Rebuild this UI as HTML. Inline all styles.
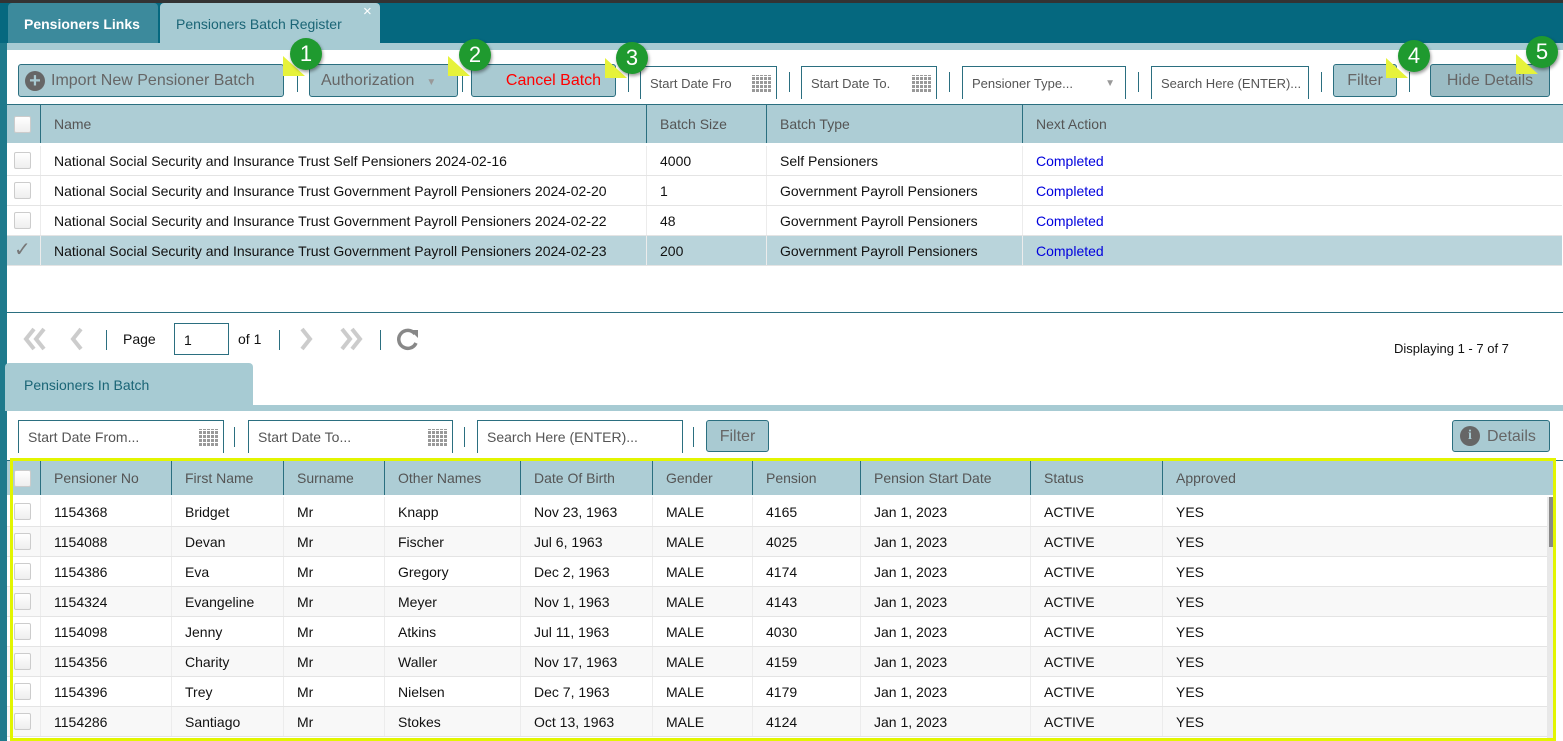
<!DOCTYPE html>
<html><head><meta charset="utf-8"><style>
*{box-sizing:border-box;margin:0;padding:0}
body{width:1563px;height:741px;overflow:hidden;background:#fff;font-family:"Liberation Sans",sans-serif;font-size:14px;color:#111;position:relative}
.a{position:absolute}
.btn{position:absolute;top:64px;height:33px;background:#a9cad2;border:1px solid #2b6f80;border-radius:3px;color:#666;font-size:16px;line-height:31px;text-align:center}
.inp{position:absolute;height:33px;background:#fff;border:1px solid #2b6f80;border-bottom:none;color:#555;font-size:13px;line-height:33px;padding-left:9px}
.sep{position:absolute;width:1px;height:20px;background:#2b6f80}
.cal{position:absolute;right:4px;top:8px;width:20px;height:17px;background:repeating-linear-gradient(90deg,#999 0 3px,transparent 3px 4px),#fff;-webkit-mask:repeating-linear-gradient(0deg,#000 0 3px,transparent 3px 4px);mask:repeating-linear-gradient(0deg,#000 0 3px,transparent 3px 4px)}
.hdr{position:absolute;background:#adcdd5;color:#555;font-size:14px}
.hdr div,.row div{position:absolute;top:0;height:100%;padding-left:13px}
.hdr div{border-left:1px solid #2b6f80}
.row{position:absolute;left:7px;height:30px;line-height:30px;border-bottom:1px solid #e4e4e4}
.row div{border-left:1px solid #ececec}
.cb{position:absolute;left:7px;width:17px;height:17px;border:1px solid #ccc;border-radius:2px;background:linear-gradient(#fff,#eee)}
.badge{position:absolute;width:32px;height:32px;border-radius:50%;background:#1f9a2f;color:#fff;font-size:22px;line-height:32px;text-align:center;box-shadow:1px 2px 3px rgba(0,0,0,.4);z-index:3}
.call{position:absolute;width:22px;height:20px;background:#e6f23a;clip-path:polygon(0 0,100% 100%,0 100%);z-index:2}
svg.pg{position:absolute;top:327px}
</style></head><body>
<div class="a" style="left:0;top:0;width:1563px;height:43px;background:#05687f"></div>
<div class="a" style="left:0;top:0;width:1563px;height:3px;background:#333"></div>
<div class="a" style="left:8px;top:3px;width:150px;height:40px;background:#3c8a9c;color:#fff;font-weight:bold;font-size:14px;line-height:42px;padding-left:16px;border-radius:4px 4px 0 0">Pensioners Links</div>
<div class="a" style="left:160px;top:3px;width:220px;height:40px;background:#a7cbd3;color:#1a6576;font-size:14px;line-height:42px;padding-left:16px;border-radius:4px 4px 0 0">Pensioners Batch Register<span class="a" style="left:203px;top:-12px;color:#fff;font-size:15px">×</span></div>
<div class="a" style="left:0;top:43px;width:1563px;height:7px;background:#a7cbd3"></div>
<div class="a" style="left:0;top:43px;width:7px;height:698px;background:#1f7a8c"></div>

<div class="btn" style="left:18px;width:266px;text-align:left;padding-left:32px">Import New Pensioner Batch<span class="a" style="left:6px;top:6px;width:20px;height:20px;border-radius:50%;background:#666;color:#a9cad2;font-weight:bold;font-size:20px;line-height:20px;text-align:center">+</span></div>
<div class="sep" style="left:297px;top:72px"></div>
<div class="btn" style="left:309px;width:149px;text-align:left;padding-left:11px">Authorization<span style="color:#999;font-size:10px;margin-left:12px">▼</span></div>
<div class="sep" style="left:462px;top:72px"></div>
<div class="btn" style="left:471px;width:145px;color:#f00;padding-left:20px">Cancel Batch</div>
<div class="sep" style="left:628px;top:72px"></div>
<div class="inp" style="left:640px;top:66px;width:137px">Start Date Fro<div class="cal"></div></div>
<div class="sep" style="left:789px;top:72px"></div>
<div class="inp" style="left:801px;top:66px;width:136px">Start Date To.<div class="cal"></div></div>
<div class="sep" style="left:949px;top:72px"></div>
<div class="inp" style="left:962px;top:66px;width:164px">Pensioner Type...<span class="a" style="right:10px;top:0;color:#999;font-size:10px">▼</span></div>
<div class="sep" style="left:1138px;top:72px"></div>
<div class="inp" style="left:1151px;top:66px;width:158px">Search Here (ENTER)...</div>
<div class="sep" style="left:1321px;top:72px"></div>
<div class="btn" style="left:1333px;width:64px">Filter</div>
<div class="sep" style="left:1409px;top:72px"></div>
<div class="btn" style="left:1430px;width:120px;background:#9bbcc4">Hide Details</div>

<div class="call" style="left:283px;top:56px"></div><div class="badge" style="left:290px;top:38px">1</div>
<div class="call" style="left:448px;top:56px"></div><div class="badge" style="left:459px;top:39px">2</div>
<div class="call" style="left:605px;top:58px"></div><div class="badge" style="left:616px;top:42px">3</div>
<div class="call" style="left:1386px;top:58px"></div><div class="badge" style="left:1398px;top:40px">4</div>
<div class="call" style="left:1516px;top:54px"></div><div class="badge" style="left:1526px;top:36px">5</div>

<div class="a" style="left:7px;top:104px;width:1556px;height:1px;background:#2b6f80"></div>
<div class="hdr" style="left:7px;top:105px;width:1556px;height:38px;line-height:38px">
<span class="cb" style="left:7px;top:11px"></span>
<div style="left:33px">Name</div><div style="left:639px">Batch Size</div><div style="left:759px">Batch Type</div><div style="left:1015px">Next Action</div></div>

<div class="row" style="top:146px;width:1555px"><span class="cb" style="top:6px"></span><div style="left:33px">National Social Security and Insurance Trust Self Pensioners 2024-02-16</div><div style="left:639px">4000</div><div style="left:759px">Self Pensioners</div><div style="left:1015px;color:#00d">Completed</div></div>
<div class="row" style="top:176px;width:1555px"><span class="cb" style="top:6px"></span><div style="left:33px">National Social Security and Insurance Trust Government Payroll Pensioners 2024-02-20</div><div style="left:639px">1</div><div style="left:759px">Government Payroll Pensioners</div><div style="left:1015px;color:#00d">Completed</div></div>
<div class="row" style="top:206px;width:1555px"><span class="cb" style="top:6px"></span><div style="left:33px">National Social Security and Insurance Trust Government Payroll Pensioners 2024-02-22</div><div style="left:639px">48</div><div style="left:759px">Government Payroll Pensioners</div><div style="left:1015px;color:#00d">Completed</div></div>
<div class="row" style="top:236px;width:1555px;background:#b9d4db"><span class="cb" style="top:6px;border:none;background:none;color:#777;font-size:20px;line-height:16px">✓</span><div style="left:33px">National Social Security and Insurance Trust Government Payroll Pensioners 2024-02-23</div><div style="left:639px">200</div><div style="left:759px">Government Payroll Pensioners</div><div style="left:1015px;color:#00d">Completed</div></div>

<div class="a" style="left:7px;top:312px;width:1556px;height:1px;background:#2b6f80"></div>
<svg class="pg" style="left:22px" width="26" height="24"><path d="M12 2L4 12l8 10M22 2l-8 10 8 10" fill="none" stroke="#ccc" stroke-width="4"/></svg>
<svg class="pg" style="left:70px" width="14" height="24"><path d="M11 2L3 12l8 10" fill="none" stroke="#ccc" stroke-width="4"/></svg>
<div class="sep" style="left:106px;top:330px"></div>
<div class="a" style="left:123px;top:331px">Page</div>
<div class="a" style="left:174px;top:323px;width:55px;height:32px;border:1px solid #2b6f80;padding:8px 0 0 9px">1</div>
<div class="a" style="left:238px;top:331px">of 1</div>
<div class="sep" style="left:279px;top:330px"></div>
<svg class="pg" style="left:299px" width="14" height="24"><path d="M3 2l8 10-8 10" fill="none" stroke="#ccc" stroke-width="4"/></svg>
<svg class="pg" style="left:338px" width="26" height="24"><path d="M4 2l8 10-8 10M14 2l8 10-8 10" fill="none" stroke="#ccc" stroke-width="4"/></svg>
<div class="sep" style="left:380px;top:330px"></div>
<svg class="a" style="left:396px;top:327px" width="24" height="24"><path d="M19 7A9 9 0 1 0 20 16" fill="none" stroke="#888" stroke-width="3.5"/><path d="M14 3h8v8z" fill="#888"/></svg>
<div class="a" style="left:1394px;top:341px;font-size:13px">Displaying 1 - 7 of 7</div>

<div class="a" style="left:5px;top:363px;width:248px;height:42px;background:#a7cbd3;color:#1a6576;line-height:44px;padding-left:19px;border-radius:4px 4px 0 0">Pensioners In Batch</div>
<div class="a" style="left:5px;top:405px;width:1558px;height:6px;background:#a7cbd3"></div>

<div class="inp" style="left:18px;top:420px;width:206px;font-size:14px">Start Date From...<div class="cal"></div></div>
<div class="sep" style="left:234px;top:427px"></div>
<div class="inp" style="left:248px;top:420px;width:205px;font-size:14px">Start Date To...<div class="cal"></div></div>
<div class="sep" style="left:464px;top:427px"></div>
<div class="inp" style="left:477px;top:420px;width:206px;font-size:14px">Search Here (ENTER)...</div>
<div class="sep" style="left:693px;top:427px"></div>
<div class="btn" style="left:706px;top:420px;width:63px;height:32px">Filter</div>
<div class="btn" style="left:1452px;top:420px;width:98px;height:32px;text-align:left;padding-left:34px">Details<span class="a" style="left:7px;top:5px;width:20px;height:20px;border-radius:50%;background:#666;color:#a9cad2;font-weight:bold;font-family:'Liberation Serif',serif;font-size:14px;line-height:20px;text-align:center">i</span></div>

<div class="a" style="left:7px;top:460px;width:1556px;height:1px;background:#2b6f80"></div>
<div class="hdr" style="left:7px;top:461px;width:1546px;height:34px;line-height:34px">
<span class="cb" style="left:7px;top:9px"></span>
<div style="left:33px">Pensioner No</div><div style="left:164px">First Name</div><div style="left:276px">Surname</div><div style="left:377px">Other Names</div><div style="left:513px">Date Of Birth</div><div style="left:645px">Gender</div><div style="left:745px">Pension</div><div style="left:853px">Pension Start Date</div><div style="left:1023px">Status</div><div style="left:1155px">Approved</div></div>

<div id="rows"></div>
<div class="a" style="left:1547px;top:497px;width:8px;height:243px;background:#e8e8e8"></div>
<div class="a" style="left:1549px;top:497px;width:6px;height:50px;background:#888"></div>
<div class="a" style="left:10px;top:458px;width:1546px;height:283px;border:3px solid #e2f500;z-index:5"></div>
<script>
var d=[["1154368","Bridget","Knapp","Nov 23, 1963","4165"],["1154088","Devan","Fischer","Jul 6, 1963","4025"],["1154386","Eva","Gregory","Dec 2, 1963","4174"],["1154324","Evangeline","Meyer","Nov 1, 1963","4143"],["1154098","Jenny","Atkins","Jul 11, 1963","4030"],["1154356","Charity","Waller","Nov 17, 1963","4159"],["1154396","Trey","Nielsen","Dec 7, 1963","4179"],["1154286","Santiago","Stokes","Oct 13, 1963","4124"]];
var h="";d.forEach(function(r,i){var t=497+i*30;h+='<div class="row" style="top:'+t+'px;width:1540px;'+(i%2?'background:#f8f8f8':'')+'"><span class="cb" style="top:6px"></span><div style="left:33px">'+r[0]+'</div><div style="left:164px">'+r[1]+'</div><div style="left:276px">Mr</div><div style="left:377px">'+r[2]+'</div><div style="left:513px">'+r[3]+'</div><div style="left:645px">MALE</div><div style="left:745px">'+r[4]+'</div><div style="left:853px">Jan 1, 2023</div><div style="left:1023px">ACTIVE</div><div style="left:1155px">YES</div></div>';});
document.getElementById("rows").innerHTML=h;
</script>
</body></html>
